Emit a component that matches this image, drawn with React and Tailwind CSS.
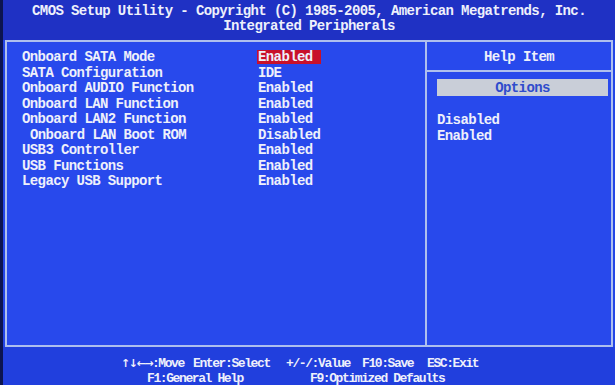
const rows = [
  { label: 'Onboard SATA Mode', value: 'Enabled', selected: true },
  { label: 'SATA Configuration', value: 'IDE' },
  { label: 'Onboard AUDIO Function', value: 'Enabled' },
  { label: 'Onboard LAN Function', value: 'Enabled' },
  { label: 'Onboard LAN2 Function', value: 'Enabled' },
  { label: 'Onboard LAN Boot ROM', value: 'Disabled', indent: true },
  { label: 'USB3 Controller', value: 'Enabled' },
  { label: 'USB Functions', value: 'Enabled' },
  { label: 'Legacy USB Support', value: 'Enabled' },
]

export default function App() {
  return (
    <div className="w-[615px] h-[385px] overflow-hidden flex flex-col bg-[#2446e6] text-[#eef0fb] font-bold font-['Liberation_Mono','DejaVu_Sans_Mono',monospace] text-[14px] tracking-[-0.6px] border-l-[3px] border-[#0c1450]">
      {/* title */}
      <div className="h-[40px] shrink-0 bg-[#1f31c4] flex flex-col items-center pt-[4px] leading-[15px] whitespace-pre">
        <div>CMOS Setup Utility - Copyright (C) 1985-2005, American Megatrends, Inc.</div>
        <div>Integrated Peripherals</div>
      </div>

      {/* main box */}
      <div className="h-[307px] shrink-0 ml-[2px] mr-[2px] flex border-2 border-[#aebfee] bg-[#2849ec]">
        <div className="w-[418px] shrink-0 pt-[8px] pl-[15px]">
          {rows.map(r => (
            <div key={r.label} className="flex items-start h-[15.5px] leading-[15.5px]">
              <div className={`w-[235px] shrink-0 whitespace-pre ${r.indent ? 'pl-[8px]' : ''}`}>{r.label}</div>
              <div className={r.selected ? 'w-[64px] h-[14px] leading-[15px] bg-[#c8102a] pl-[1px]' : 'pl-[1px]'}>{r.value}</div>
            </div>
          ))}
        </div>

        <div className="flex-1 border-l-2 border-[#aebfee] flex flex-col">
          <div className="h-[30px] shrink-0 border-b-2 border-[#aebfee] flex items-center justify-center pt-[3px]">
            Help Item
          </div>
          <div className="mt-[7px] ml-[10px] mr-[3px] h-[17px] bg-[#c9ced8] text-[#2f4ccc] flex items-center justify-center pt-[2px]">
            Options
          </div>
          <div className="mt-[17px] ml-[10px] leading-[15.5px]">
            <div>Disabled</div>
            <div>Enabled</div>
          </div>
        </div>
      </div>

      {/* key legend */}
      <div className="flex-1 bg-[#213fdd] pt-[9px] leading-[15px] whitespace-pre text-[13px] tracking-[-1.4px]">
        <div className="flex pl-[118px]">
          <span className="w-[72px]">
            <span className="font-['DejaVu_Sans',sans-serif] text-[11px] tracking-[-1.5px]">↑↓←→</span>:Move
          </span>
          <span className="w-[93px]">Enter:Select</span>
          <span className="w-[76px]">+/-/:Value</span>
          <span className="w-[65px]">F10:Save</span>
          <span>ESC:Exit</span>
        </div>
        <div className="flex pl-[144px]">
          <span className="w-[163px]">F1:General Help</span>
          <span>F9:Optimized Defaults</span>
        </div>
      </div>
    </div>
  )
}
